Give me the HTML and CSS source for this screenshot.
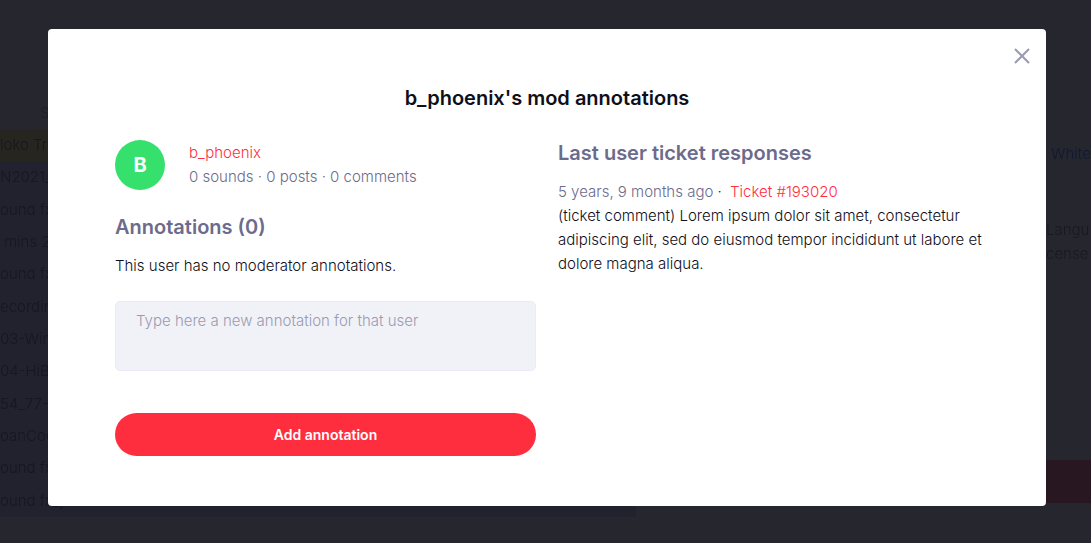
FILE: index.html
```html
<!DOCTYPE html>
<html lang="en">
<head>
<meta charset="utf-8">
<meta name="viewport" content="width=device-width, initial-scale=1">
<title>Mod annotations</title>
<link rel="stylesheet" href="styles.css">
</head>
<body>
<div class="page" aria-hidden="true">
  <div class="sounds">
    <div class="sounds-head">S</div>
    <div class="sound sound-selected">loko Tra</div>
    <div class="sound">N2021_</div>
    <div class="sound">ound fx_</div>
    <div class="sound sound-inset">mins 2</div>
    <div class="sound">ound fx_</div>
    <div class="sound">ecordin</div>
    <div class="sound">03-Win</div>
    <div class="sound">04-HiB</div>
    <div class="sound">54_77-</div>
    <div class="sound">oanCoo</div>
    <div class="sound">ound fx_</div>
    <div class="sound">ound fx_y</div>
  </div>
  <div class="side">
    <div class="side-link">White</div>
    <div class="side-text">Langu<br>cense</div>
    <div class="side-action"></div>
  </div>
</div>
<div class="overlay">
  <section class="modal" role="dialog" aria-modal="true" aria-labelledby="modal-title">
    <button class="close" type="button" aria-label="Close">
      <svg width="16" height="16" viewBox="0 0 16 16" fill="none" stroke="currentColor" stroke-width="2"><path d="M1 1 15 15M15 1 1 15"/></svg>
    </button>
    <h1 class="title" id="modal-title">b_phoenix's mod annotations</h1>
    <div class="columns">
      <div class="column">
        <div class="user">
          <div class="avatar">B</div>
          <div>
            <a class="link" href="#user">b_phoenix</a>
            <div class="muted">0 sounds · 0 posts · 0 comments</div>
          </div>
        </div>
        <h2 class="heading">Annotations (0)</h2>
        <p class="text">This user has no moderator annotations.</p>
        <form class="form">
          <textarea class="field" aria-label="New annotation" placeholder="Type here a new annotation for that user"></textarea>
          <button class="submit" type="button">Add annotation</button>
        </form>
      </div>
      <div class="column">
        <h2 class="heading">Last user ticket responses</h2>
        <p class="text"><span class="muted">5 years, 9 months ago</span> · <a class="link ticket" href="#ticket">Ticket #193020</a></p>
        <p class="text comment">(ticket comment) Lorem ipsum dolor sit amet, consectetur adipiscing elit, sed do eiusmod tempor incididunt ut labore et dolore magna aliqua.</p>
      </div>
    </div>
  </section>
</div>
</body>
</html>
```
FILE: styles.css
```css
* { box-sizing: border-box; }
body {
  margin: 0;
  background: #26262f;
  color: #0f0f1a;
  font: 350 15px/24px Inter, "Liberation Sans", sans-serif;
}
h1, h2, p { margin: 0; }

/* Dimmed page behind the dialog */
.page {
  position: fixed;
  inset: 0;
  display: flex;
  justify-content: space-between;
  overflow: hidden;
  color: #171722;
}
.sounds {
  width: 636px;
  padding-top: 96px;
}
.sounds-head {
  padding-left: 40px;
  line-height: 33px;
  color: #1d1d29;
}
.sound {
  background: #22222e;
  line-height: 32px;
  white-space: nowrap;
}
.sound:nth-child(3n) { padding-bottom: 1px; }
.sound-selected { background: #27251f; }
.sound-inset { padding-left: 4px; }
.side {
  width: 45px;
  padding-top: 142px;
  overflow: hidden;
}
.side-link {
  padding-left: 5px;
  color: #101a30;
}
.side-text {
  padding-top: 52px;
  color: #191924;
}
.side-action {
  height: 43px;
  margin-top: 194px;
  background: #281620;
}

/* Dialog */
.overlay {
  position: relative;
  padding: 29px 45px 37px 48px;
}
.modal {
  position: relative;
  padding: 56px 67px 50px;
  border-radius: 4px;
  background: #fff;
}
.close {
  position: absolute;
  top: 15px;
  right: 12px;
  display: grid;
  place-items: center;
  width: 24px;
  height: 24px;
  padding: 0;
  border: 0;
  background: none;
  color: #9a9ab1;
}
.title, .heading {
  font-size: 20px;
  font-weight: 600;
  line-height: 26px;
}
.title { text-align: center; }
.columns {
  display: grid;
  grid-template-columns: 1fr 1fr;
  gap: 22px;
  margin-top: 29px;
}
.heading {
  margin-bottom: 14px;
  color: #6c6b8b;
}
.user {
  display: flex;
  align-items: center;
  gap: 24px;
  margin-bottom: 24px;
}
.avatar {
  width: 50px;
  height: 50px;
  border-radius: 50%;
  background: #35e06d;
  color: #fff;
  font-size: 20px;
  font-weight: 700;
  line-height: 50px;
  text-align: center;
}
.link {
  color: #ff2e3f;
  text-decoration: none;
}
.ticket { margin-left: 4px; }
.comment { margin-right: -12px; }
.muted { color: #6c6b8b; }
.form {
  display: grid;
  gap: 42px;
  margin-top: 23px;
}
.field {
  display: block;
  width: 100%;
  height: 70px;
  padding: 7px 20px;
  border: 1px solid #ebebf7;
  border-radius: 5px;
  background: #f1f2f8;
  color: #0f0f1a;
  font: inherit;
  resize: none;
}
.field::placeholder { color: #9a9ab1; }
.submit {
  height: 43px;
  padding: 0;
  border: 0;
  border-radius: 22px;
  background: #ff2e3f;
  color: #fff;
  font: inherit;
  font-size: 14px;
  font-weight: 600;
}
```
